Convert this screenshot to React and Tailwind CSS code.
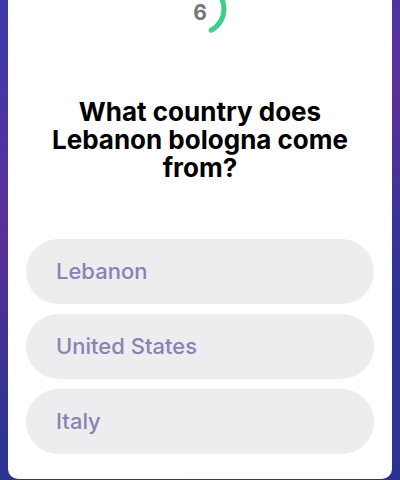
import React from 'react';

const options = ['Lebanon', 'United States', 'Italy'];

// Countdown ring: partial green arc around the seconds left
const Timer = ({ seconds, progress }) => {
  const r = 24;
  const c = 2 * Math.PI * r;
  return (
    <div className="relative w-[56px] h-[56px] -mt-[19px] flex items-center justify-center">
      <svg className="absolute inset-0" width="56" height="56" viewBox="0 0 56 56">
        <circle
          cx="28"
          cy="28"
          r={r}
          fill="none"
          stroke="#3ecf8e"
          strokeWidth="5"
          strokeLinecap="round"
          strokeDasharray={`${c * progress} ${c}`}
          transform="rotate(-90 28 28)"
        />
      </svg>
      <span className="text-[21px] font-bold text-[#767676] leading-none mt-[6px]">{seconds}</span>
    </div>
  );
};

export default function App() {
  return (
    <div
      className="w-[400px] h-[480px] overflow-hidden px-2 bg-[linear-gradient(160deg,#3a3aab_0%,#5a2f98_38%,#2c3592_70%,#2b3190_100%)]"
      style={{ fontFamily: 'Inter, "Open Sans", sans-serif' }}
    >
      <div className="bg-white h-[479px] rounded-b-[10px] flex flex-col items-center">
        <Timer seconds={6} progress={0.42} />

        <h2 className="mt-[61px] px-3 text-center text-[26px] leading-[28px] font-bold text-black">
          What country does
          <br />
          Lebanon bologna come
          <br />
          from?
        </h2>

        <div className="mt-[57px] w-full px-[18px] flex flex-col gap-[10px]">
          {options.map((opt) => (
            <button
              key={opt}
              className="h-[65px] w-full rounded-full bg-[#ededf0] px-[30px] text-left text-[22px] font-medium text-[#8983b3]"
            >
              {opt}
            </button>
          ))}
        </div>
      </div>
    </div>
  );
}
